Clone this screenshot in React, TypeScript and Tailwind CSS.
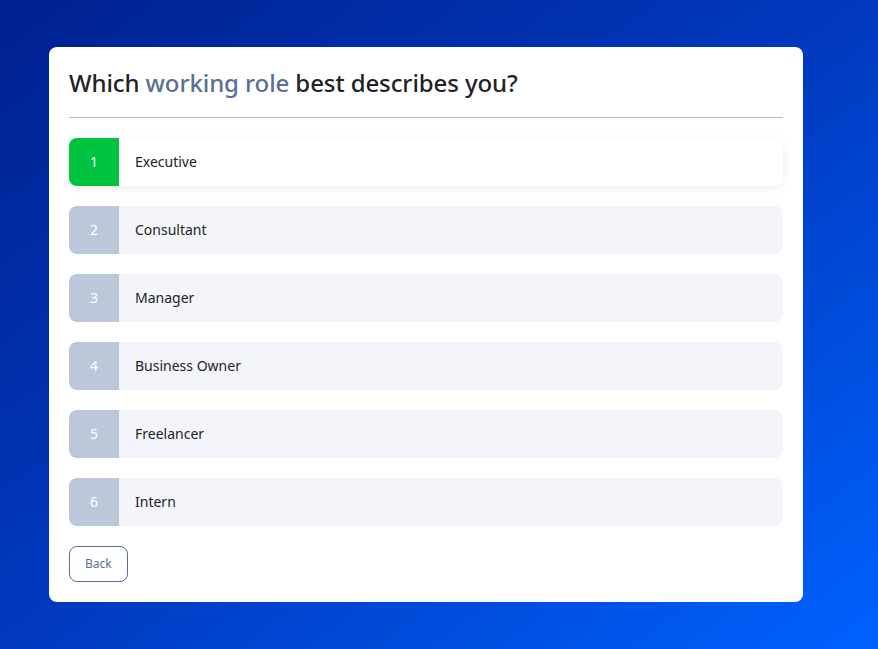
const options = ["Executive", "Consultant", "Manager", "Business Owner", "Freelancer", "Intern"];

export default function App() {
  const selected = 0;
  return (
    <div
      className="w-full min-h-screen bg-gradient-to-br from-[#00218f] via-[#0139bf] to-[#0062ff] px-[49px] pt-[47px] pb-[47px]"
      style={{ fontFamily: '"Noto Sans", "Open Sans", sans-serif' }}
    >
      <div className="w-[754px] bg-white rounded-lg px-5 pt-[20px] pb-5">
        <h1 className="text-[24px] leading-[32px] font-medium tracking-[-0.1px] text-[#222326] pb-[18px] border-b border-[#b9c0cc]">
          Which <span className="text-[#5a6e98]">working role</span> best describes you?
        </h1>
        <div className="flex flex-col gap-5 mt-5">
          {options.map((o, i) => {
            const active = i === selected;
            return (
              <div
                key={o}
                className={`flex h-12 rounded-lg overflow-hidden ${
                  active ? "bg-white shadow-[0_2px_8px_rgba(0,0,0,0.08)]" : "bg-[#f4f5fb]"
                }`}
              >
                <div
                  className={`w-[50px] flex items-center justify-center text-white text-sm ${
                    active ? "bg-[#00c43f]" : "bg-[#bcc7d9]"
                  }`}
                >
                  {i + 1}
                </div>
                <div className="flex items-center pl-4 text-sm text-[#222326]">{o}</div>
              </div>
            );
          })}
        </div>
        <button className="mt-5 h-9 px-[15px] rounded-lg border border-[#5a6e98] text-[#5a6e98] text-xs bg-white">
          Back
        </button>
      </div>
    </div>
  );
}
